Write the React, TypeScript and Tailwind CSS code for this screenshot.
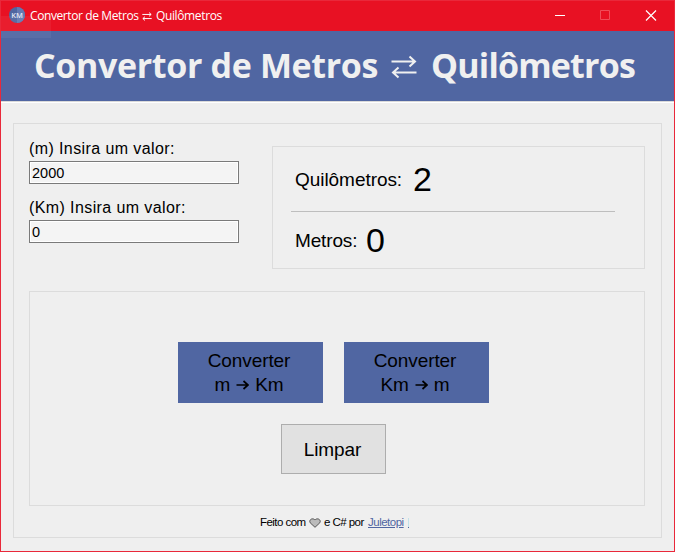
import React from "react";

function Swap({ className, width }: { className: string; width: number }) {
  return (
    <svg className={className} viewBox="0 0 26 24" fill="none" stroke="currentColor" strokeWidth={width}>
      <path d="M.5 6.500H24M18.500 1.500l5.500 5-5.500 5" />
      <path d="M25.500 17.500H2M7.500 12.500l-5.500 5 5.500 5" />
    </svg>
  );
}

function Arrow() {
  return (
    <svg className="h-[10px] w-[13px]" viewBox="0 0 13 10" fill="none" stroke="#000" strokeWidth="1.7">
      <path d="M0.5 5H12M7.500 1l4.500 4-4.500 4" />
    </svg>
  );
}

function TitleBar() {
  return (
    <div className="flex h-[30px] shrink-0 items-center bg-[#e81123] text-white">
      <svg className="mb-[2px] ml-2 h-4 w-4 shrink-0" viewBox="0 0 16 16">
        <circle cx="8" cy="8" r="8" fill="#5066a0" />
        <path d="M8 0a8 8 0 0 1 0 16Z" fill="#6479b2" />
        <text x="8" y="10.500" textAnchor="middle" fontSize="7.500" fontWeight="600" fill="#e4e7f2" fontFamily="Open Sans, sans-serif">KM</text>
      </svg>
      <div className="ml-[5px] flex h-full items-center whitespace-pre font-['Open_Sans',sans-serif] text-[12px]">
        <span className="w-[112px] tracking-[-0.4px]">Convertor de Metros</span>
        <Swap className="mt-[1px] mr-[4px] h-[9px] w-[10px]" width={2.6} />
        <span className="tracking-[-0.37px]">Quilômetros</span>
      </div>
      <div className="mr-[17px] mb-px ml-auto flex items-center">
        <svg className="h-[11px] w-[102px]" viewBox="0 0 102 11" fill="none" stroke="#fff">
          <path d="M0 5.5H10" />
          <path d="M45.5 .5h9v9h-9Z" stroke="#f04c59" />
          <path d="M91 .5l10 10M101 .5l-10 10" strokeWidth="1.2" />
        </svg>
      </div>
    </div>
  );
}

function Field({ label, value }: { label: string; value: string }) {
  return (
    <label className="flex flex-col">
      <span className="flex h-[23px] items-center pb-[2px] text-[16px] tracking-[0.4px]">{label}</span>
      <input
        defaultValue={value}
        className="h-[23px] w-[210px] border border-[#7a7a7a] bg-[#f4f4f4] px-[2px] pt-px text-[14.5px] ring-1 ring-white outline-none ring-inset"
      />
    </label>
  );
}

function ConvertButton({ from, to }: { from: string; to: string }) {
  return (
    <button className="flex h-[61px] w-[145px] flex-col items-center bg-[#5066a2] pt-[7px] pr-[3px] text-[19px] leading-[24px] tracking-[-0.1px]">
      <span>Converter</span>
      <span className="flex items-center gap-[6px]">
        <span>{from}</span>
        <Arrow />
        <span>{to}</span>
      </span>
    </button>
  );
}

export default function App() {
  return (
    <div className="relative flex h-[552px] w-[675px] flex-col overflow-hidden border border-[#e9283a] bg-[#efefef] font-['Liberation_Sans',Arial,sans-serif] text-black">
      <TitleBar />
      <header className="flex h-[70px] shrink-0 items-center bg-[#5066a2] pl-[33px] whitespace-pre font-['Open_Sans',sans-serif] text-[34px] font-bold text-[#f0f0f0]">
        <span className="w-[357px] pb-[2px] tracking-[-0.35px]">Convertor de Metros</span>
        <Swap className="mt-[2px] mr-[14px] h-[24px] w-[26px]" width={2} />
        <span className="pb-[2px] tracking-[-0.8px]">Quilômetros</span>
      </header>
      <div className="h-[2px] shrink-0 border-t border-[#dadada] bg-white" />
      <main className="mt-[20px] ml-[12px] flex h-[415px] w-[649px] flex-col border border-[#dcdcdc] px-[15px]">
        <div className="flex justify-between">
          <div className="flex flex-col gap-[13px] pt-[14px]">
            <Field label="(m) Insira um valor:" value="2000" />
            <Field label="(Km) Insira um valor:" value="0" />
          </div>
          <section className="mt-[22px] mr-[1px] flex h-[123px] w-[373px] flex-col border border-[#dcdcdc] pl-[18px]">
            <div className="flex h-[64px] w-[324px] shrink-0 items-center pt-[2px] pl-[4px]">
              <span className="w-[118px] text-[19px] tracking-[-0.05px]">Quilômetros:</span>
              <span className="pb-[2px] text-[34px] tracking-[-1px]">2</span>
            </div>
            <div className="h-px w-[324px] shrink-0 bg-[#bebebe]" />
            <div className="flex h-[56px] shrink-0 items-center pt-px pl-[4px]">
              <span className="w-[71px] pt-px text-[19px] tracking-[-0.15px]">Metros:</span>
              <span className="text-[34px]">0</span>
            </div>
          </section>
        </div>
        <section className="mt-[22px] flex h-[215px] w-[616px] flex-col border border-[#dcdcdc] pt-[50px]">
          <div className="ml-[148px] flex gap-[21px]">
            <ConvertButton from="m" to="Km" />
            <ConvertButton from="Km" to="m" />
          </div>
          <button className="mt-[21px] ml-[251px] h-[50px] w-[105px] border border-[#adadad] bg-[#e1e1e1] pt-[2px] pr-[2px] text-[19px] tracking-[-0.1px]">
            Limpar
          </button>
        </section>
        <footer className="ml-[231px] flex h-[31px] items-center pt-[2px] whitespace-pre text-[11.5px] tracking-[-0.55px]">
          <span className="w-[49px]">Feito com</span>
          <svg className="h-[10px] w-[12px]" viewBox="0 0 12 10" fill="#bbb" stroke="#555">
            <path d="M6 9.300L1.200 4.800C-.600 2 3.500-.800 6 2 8.500-.800 12.600 2 10.800 4.800Z" />
          </svg>
          <span className="ml-[3px] w-[44px]">e C# por</span>
          <a className="tracking-[-0.5px] text-[#5066a2] underline">Juletopi</a>
          <span className="ml-[4px] flex h-[10px] w-px flex-col justify-end bg-[#c3e3ea]">
            <span className="h-px bg-[#5066a2]" />
          </span>
        </footer>
      </main>
      <div className="absolute top-[15px] left-0 h-[22px] w-[50px] bg-white/5" />
    </div>
  );
}
